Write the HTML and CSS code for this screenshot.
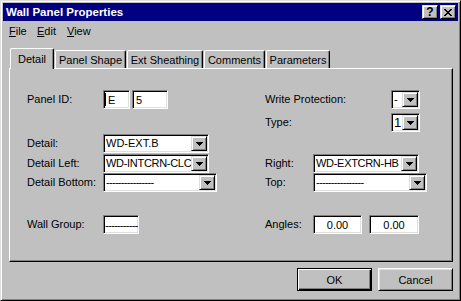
FILE: index.html
```html
<!DOCTYPE html>
<html lang="en">
<head>
  <meta charset="UTF-8">
  <title>Wall Panel Properties</title>
  <link rel="stylesheet" href="styles.css">
</head>
<body>
  <div class="window">
    <div class="titlebar">
      <span class="title">Wall Panel Properties</span>
      <div class="tbtns">
        <span class="tbtn help">?</span>
        <span class="tbtn close">
          <svg width="8" height="7" viewBox="0 0 8 7"><path d="M0 0h2v1H0zM6 0h2v1H6zM1 1h2v1H1zM5 1h2v1H5zM2 2h4v1H2zM3 3h2v1H3zM2 4h4v1H2zM1 5h2v1H1zM5 5h2v1H5zM0 6h2v1H0zM6 6h2v1H6z"/></svg>
        </span>
      </div>
    </div>

    <div class="menubar">
      <span class="menu file"><u>F</u>ile</span>
      <span class="menu edit"><u>E</u>dit</span>
      <span class="menu"><u>V</u>iew</span>
    </div>

    <div class="body">
      <div class="tabs">
        <div class="tab active t-detail">Detail</div>
        <div class="tab t-shape">Panel Shape</div>
        <div class="tab t-sheath">Ext Sheathing</div>
        <div class="tab t-comments">Comments</div>
        <div class="tab t-params">Parameters</div>
      </div>

      <div class="panel">
        <div class="row r1">
          <div class="left">
            <span class="lbl">Panel ID:</span>
            <span class="field id1"><span class="caret"></span>E</span>
            <span class="field id2">5</span>
          </div>
          <div class="right">
            <span class="lbl-wide">Write Protection:</span>
            <span class="combo small"><span class="val">-</span><span class="drop"><svg width="7" height="4" viewBox="0 0 7 4"><path d="M0 0h7v1H0zM1 1h5v1H1zM2 2h3v1H2zM3 3h1v1H3z"/></svg></span></span>
          </div>
        </div>

        <div class="row r2">
          <div class="left"></div>
          <div class="right">
            <span class="lbl-wide">Type:</span>
            <span class="combo small"><span class="val big">1</span><span class="drop"><svg width="7" height="4" viewBox="0 0 7 4"><path d="M0 0h7v1H0zM1 1h5v1H1zM2 2h3v1H2zM3 3h1v1H3z"/></svg></span></span>
          </div>
        </div>

        <div class="row r3">
          <div class="left">
            <span class="lbl">Detail:</span>
            <span class="combo mid"><span class="val">WD-EXT.B</span><span class="drop"><svg width="7" height="4" viewBox="0 0 7 4"><path d="M0 0h7v1H0zM1 1h5v1H1zM2 2h3v1H2zM3 3h1v1H3z"/></svg></span></span>
          </div>
        </div>

        <div class="row r4">
          <div class="left">
            <span class="lbl">Detail Left:</span>
            <span class="combo mid"><span class="val tight">WD-INTCRN-CLC</span><span class="drop"><svg width="7" height="4" viewBox="0 0 7 4"><path d="M0 0h7v1H0zM1 1h5v1H1zM2 2h3v1H2zM3 3h1v1H3z"/></svg></span></span>
          </div>
          <div class="right">
            <span class="lbl-r">Right:</span>
            <span class="combo mid"><span class="val tight">WD-EXTCRN-HB</span><span class="drop"><svg width="7" height="4" viewBox="0 0 7 4"><path d="M0 0h7v1H0zM1 1h5v1H1zM2 2h3v1H2zM3 3h1v1H3z"/></svg></span></span>
          </div>
        </div>

        <div class="row r5">
          <div class="left">
            <span class="lbl">Detail Bottom:</span>
            <span class="combo wide"><span class="val dashes">----------------</span><span class="drop"><svg width="7" height="4" viewBox="0 0 7 4"><path d="M0 0h7v1H0zM1 1h5v1H1zM2 2h3v1H2zM3 3h1v1H3z"/></svg></span></span>
          </div>
          <div class="right">
            <span class="lbl-r">Top:</span>
            <span class="combo wide"><span class="val dashes">----------------</span><span class="drop"><svg width="7" height="4" viewBox="0 0 7 4"><path d="M0 0h7v1H0zM1 1h5v1H1zM2 2h3v1H2zM3 3h1v1H3z"/></svg></span></span>
          </div>
        </div>

        <div class="row r6">
          <div class="left">
            <span class="lbl">Wall Group:</span>
            <span class="field group dashes">-----------</span>
          </div>
          <div class="right">
            <span class="lbl-r">Angles:</span>
            <span class="field angle a1">0.00</span>
            <span class="field angle a2">0.00</span>
          </div>
        </div>
      </div>

      <div class="actions">
        <button class="btn default">OK</button>
        <button class="btn">Cancel</button>
      </div>
    </div>
  </div>
</body>
</html>
```

FILE: styles.css
```css
body {
  margin: 0;
  background: #c0c0c0;
  font-family: "Liberation Sans", Arial, sans-serif;
  font-size: 11px;
  color: #000;
}
.window {
  width: 461px;
  height: 301px;
  box-sizing: border-box;
  background: #c0c0c0;
  border: 1px solid;
  border-color: #dfdfdf #000 #000 #dfdfdf;
  box-shadow: inset 1px 1px #fff, inset -1px -1px #808080;
  padding: 2px;
  display: flex;
  flex-direction: column;
}

/* title bar */
.titlebar {
  height: 18px;
  background: #000080;
  color: #fff;
  display: flex;
  align-items: center;
  padding: 0 2px 0 3px;
}
.title {
  flex: 1;
  font-weight: bold;
  font-size: 11.5px;
}
.tbtns {
  display: flex;
  gap: 2px;
}
.tbtn {
  width: 16px;
  height: 14px;
  box-sizing: border-box;
  background: #c0c0c0;
  color: #000;
  border: 1px solid;
  border-color: #dfdfdf #000 #000 #dfdfdf;
  box-shadow: inset 1px 1px #fff, inset -1px -1px #808080;
  display: flex;
  align-items: center;
  justify-content: center;
}
.help {
  font-weight: bold;
  font-size: 12px;
  line-height: 12px;
}

/* menu */
.menubar {
  height: 19px;
  display: flex;
  align-items: center;
  padding-left: 6px;
}
.menu.file { width: 28px; }
.menu.edit { width: 30px; }

/* tabs */
.body {
  flex: 1;
  padding: 0 5px 0 6px;
}
.tabs {
  position: relative;
  z-index: 1;
  display: flex;
  align-items: flex-end;
  height: 20px;
  margin-top: 8px;
  padding-left: 1px;
}
.tab {
  height: 18px;
  box-sizing: border-box;
  padding-top: 1px;
  background: #c0c0c0;
  border: 1px solid;
  border-bottom: none;
  border-color: #fff #000 #000 #fff;
  border-radius: 2px 2px 0 0;
  box-shadow: inset -1px 0 #808080;
  margin-right: 1px;
  display: flex;
  align-items: center;
  justify-content: center;
}
.tab.active {
  height: 21px;
  padding-top: 0;
  margin-bottom: -1px;
}
.t-detail { width: 44px; }
.t-shape { width: 71px; }
.t-sheath { width: 76px; }
.t-comments { width: 61px; }
.t-params { width: 64px; }

/* page */
.panel {
  height: 194px;
  box-sizing: border-box;
  border: 1px solid;
  border-color: #fff #000 #000 #fff;
  box-shadow: inset -1px -1px #808080;
  padding: 21px 0 0 17px;
}
.row {
  display: flex;
  align-items: center;
  height: 19px;
}
.r2 { margin-top: 4px; }
.r3 { margin-top: 2px; }
.r4 { margin-top: 1px; }
.r6 { margin-top: 23px; }
.left {
  width: 238px;
  display: flex;
  align-items: center;
}
.right {
  display: flex;
  align-items: center;
}
.lbl { width: 76px; }
.lbl-r { width: 48px; }
.lbl-wide { width: 126px; }
.lbl, .lbl-r, .lbl-wide {
  padding-bottom: 2px;
}

.field {
  height: 19px;
  box-sizing: border-box;
  background: #fff;
  border: 1px solid;
  border-color: #808080 #fff #fff #808080;
  box-shadow: inset 1px 1px #000, inset -1px -1px #dfdfdf;
  padding: 0 3px;
  display: flex;
  align-items: center;
  white-space: nowrap;
  overflow: hidden;
}
.id1 {
  width: 27px;
  padding-left: 1px;
  margin-right: 2px;
}
.id2 { width: 36px; }
.caret {
  width: 1px;
  height: 13px;
  background: #000;
  margin-right: 2px;
}
.group {
  width: 36px;
  padding: 0 1px;
}
.angle {
  justify-content: center;
}
.a1 {
  width: 49px;
  margin-right: 7px;
}
.a2 { width: 50px; }

.combo {
  height: 19px;
  box-sizing: border-box;
  background: #fff;
  border: 1px solid;
  border-color: #808080 #fff #fff #808080;
  box-shadow: inset 1px 1px #000, inset -1px -1px #dfdfdf;
  padding: 1px;
  display: flex;
}
.combo.small { width: 29px; }
.combo.mid { width: 106px; }
.combo.wide { width: 114px; }
.val {
  flex: 1;
  padding-left: 1px;
  white-space: nowrap;
  overflow: hidden;
  line-height: 15px;
}
.val.big { font-size: 13px; }
.val.tight { letter-spacing: -0.3px; }
.dashes { letter-spacing: -0.7px; }
.drop {
  width: 16px;
  box-sizing: border-box;
  background: #c0c0c0;
  border: 1px solid;
  border-color: #dfdfdf #000 #000 #dfdfdf;
  box-shadow: inset 1px 1px #fff, inset -1px -1px #808080;
  display: flex;
  align-items: center;
  justify-content: center;
}

/* buttons */
.actions {
  display: flex;
  justify-content: flex-end;
  gap: 6px;
  margin-top: 6px;
}
.btn {
  width: 75px;
  height: 23px;
  box-sizing: border-box;
  padding: 0;
  font: inherit;
  color: #000;
  background: #c0c0c0;
  border: 1px solid;
  border-color: #fff #000 #000 #fff;
  box-shadow: inset 1px 1px #dfdfdf, inset -1px -1px #808080;
}
.btn.default {
  border-color: #000;
  box-shadow: inset 1px 1px #fff, inset -1px -1px #000, inset -2px -2px #808080;
}
```
